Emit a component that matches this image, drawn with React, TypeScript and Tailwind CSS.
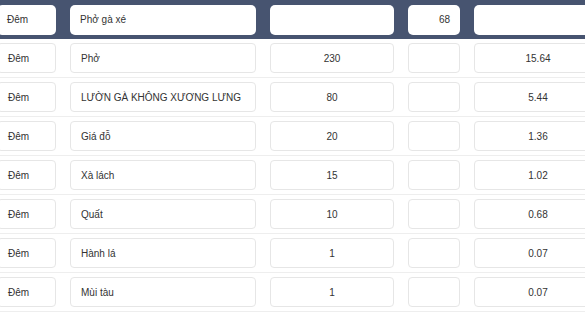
import clsx from 'clsx';

type Row = { shift: string; name: string; qty: string; pct: string; cost: string };

const rows: Row[] = [
    { shift: 'Đêm', name: 'Phở', qty: '230', pct: '', cost: '15.64' },
    { shift: 'Đêm', name: 'LƯỜN GÀ KHÔNG XƯƠNG LƯNG', qty: '80', pct: '', cost: '5.44' },
    { shift: 'Đêm', name: 'Giá đỗ', qty: '20', pct: '', cost: '1.36' },
    { shift: 'Đêm', name: 'Xà lách', qty: '15', pct: '', cost: '1.02' },
    { shift: 'Đêm', name: 'Quất', qty: '10', pct: '', cost: '0.68' },
    { shift: 'Đêm', name: 'Hành lá', qty: '1', pct: '', cost: '0.07' },
    { shift: 'Đêm', name: 'Mùi tàu', qty: '1', pct: '', cost: '0.07' },
];

const cols = ['w-[73px]', 'w-[200px]', 'w-[138px]', 'w-[66px]', 'w-[142px]'];

function Cell({ value, col, header, align }: { value: string; col: number; header?: boolean; align: string }) {
    return (
        <div className={clsx(cols[col], 'shrink-0 px-[7px]')}>
            <div
                className={clsx(
                    'h-[30px] flex items-center bg-white px-[10px] text-[10px] text-[#333] whitespace-nowrap',
                    header ? 'rounded-[5px]' : 'rounded-[4px] border border-[#e6e6e6]',
                    align
                )}
            >
                {value}
            </div>
        </div>
    );
}

export default function App() {
    return (
        <div className="w-[585px] h-[315px] overflow-hidden bg-white" style={{ fontFamily: '"Liberation Sans", Arial, sans-serif' }}>
            <div className="-ml-[10px] w-[640px]">
                <div className="flex items-center h-[39px] bg-[#475470]">
                    <Cell col={0} header value="Đêm" align="justify-start" />
                    <Cell col={1} header value="Phở gà xé" align="justify-start" />
                    <Cell col={2} header value="" align="justify-center" />
                    <Cell col={3} header value="68" align="justify-end" />
                    <Cell col={4} header value="" align="justify-center" />
                </div>
                {rows.map((r, i) => (
                    <div key={i} className="flex items-center h-[39px] border-b border-[#eeeeee]">
                        <Cell col={0} value={r.shift} align="justify-start" />
                        <Cell col={1} value={r.name} align="justify-start" />
                        <Cell col={2} value={r.qty} align="justify-center" />
                        <Cell col={3} value={r.pct} align="justify-center" />
                        <Cell col={4} value={r.cost} align="justify-center" />
                    </div>
                ))}
            </div>
        </div>
    );
}
